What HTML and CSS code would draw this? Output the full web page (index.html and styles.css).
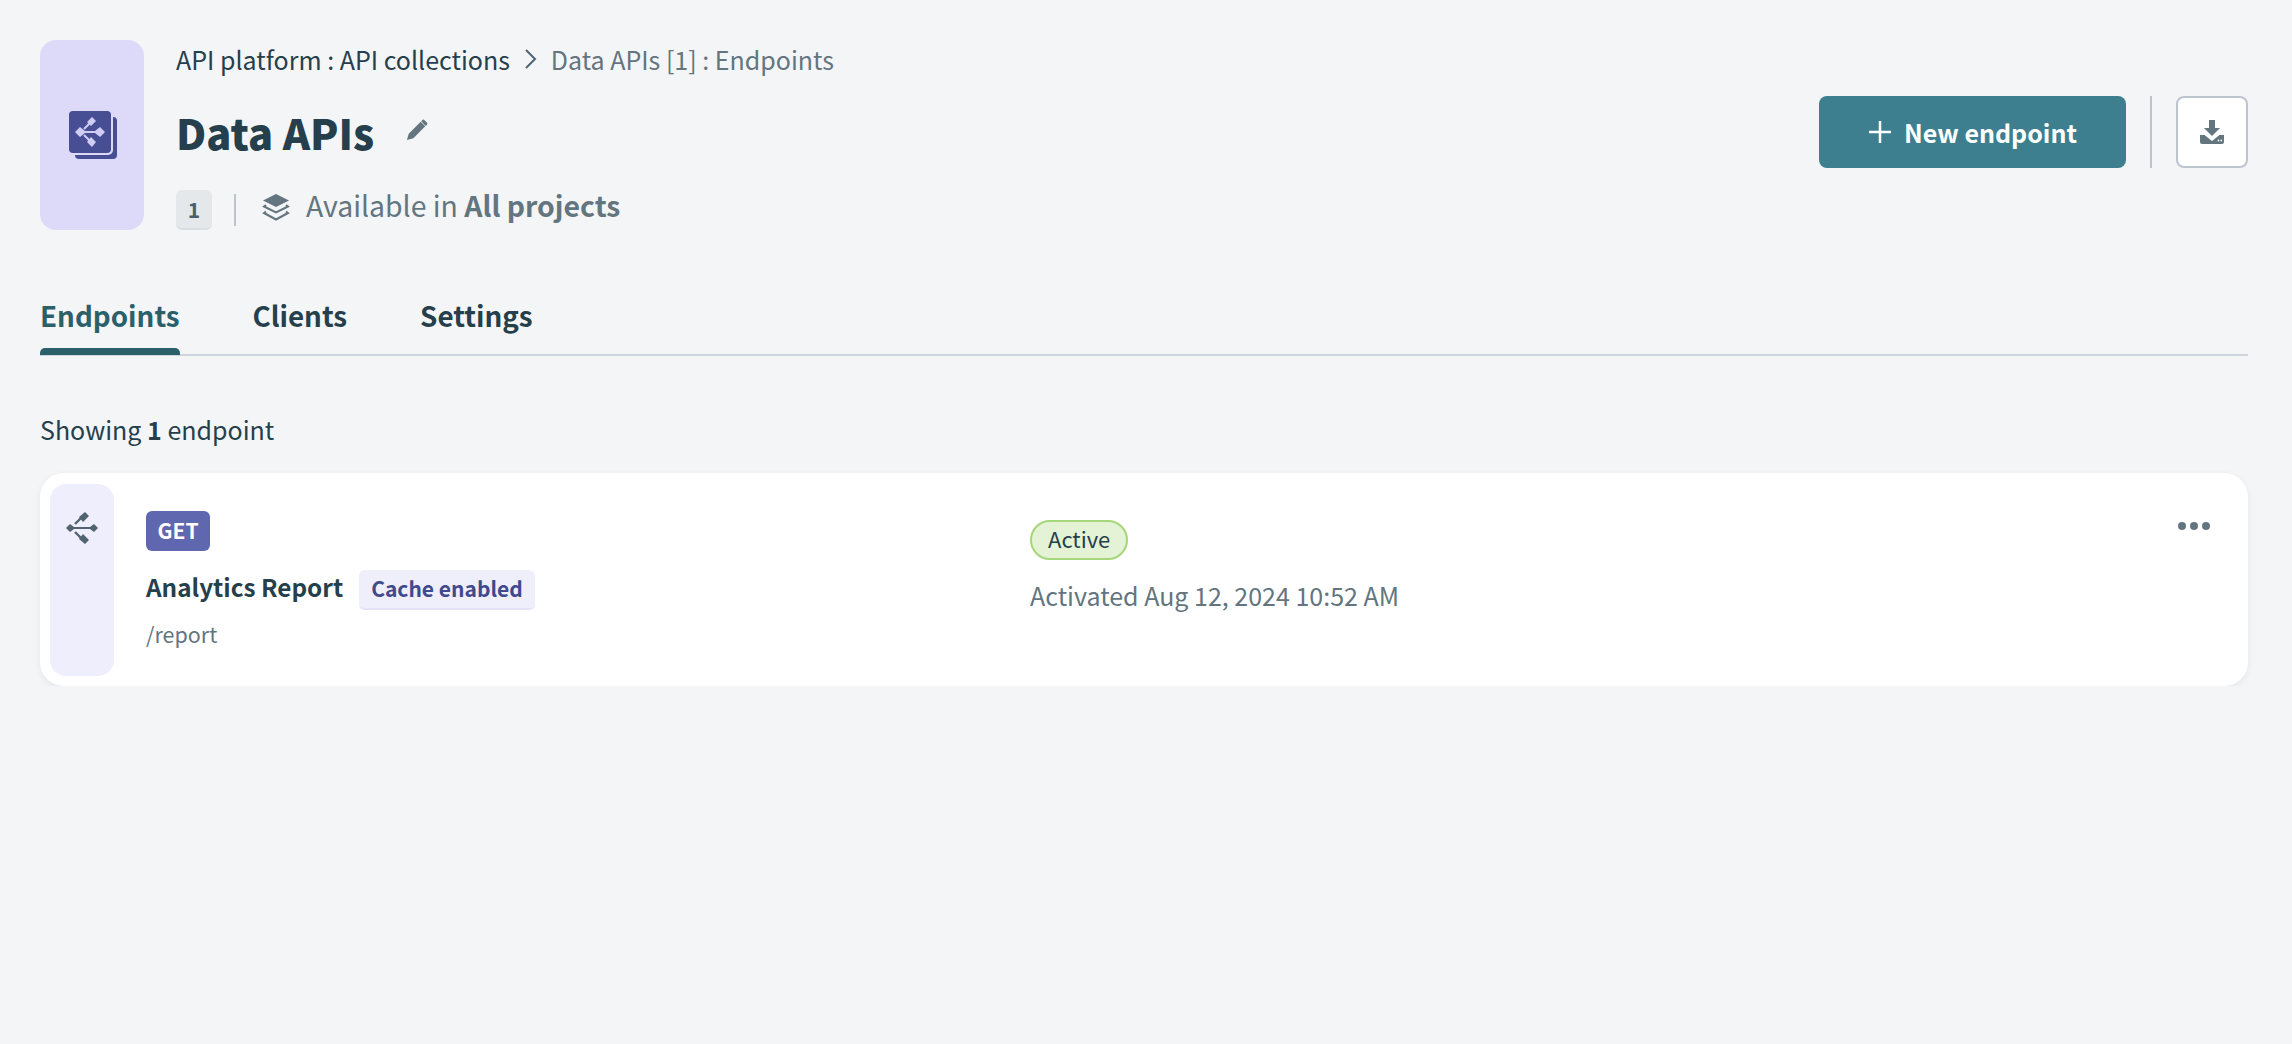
FILE: index.html
```html
<!doctype html>
<html lang="en">
<head>
	<meta charset="UTF-8">
	<title>Data APIs</title>
	<link rel="stylesheet" href="styles.css">
</head>
<body>
	<div class="page">
		<div class="head">
			<div class="tile">
				<svg class="tile-icon" width="48" height="48" viewBox="0 0 48 48">
					<rect class="back" x="6" y="6" width="42" height="42" rx="4"/>
					<rect class="gap" x="0" y="0" width="44" height="44" rx="5"/>
					<rect class="back" x="0" y="0" width="42" height="42" rx="4"/>
					<path class="front" d="M6 21l5-5 5 4h10l5-4 5 5-5 5-5-4H16l-5 4z"/>
					<path class="front-line" d="M15 18l6-6M15 24l6 6"/>
					<path class="front" d="M18 11l5-5 4 4-5 5zM18 31l4-5 5 5-4 5z"/>
				</svg>
			</div>
			<div class="head-main">
				<div class="crumbs">
					<span>API platform : API collections</span>
					<svg class="chevron" width="14" height="22" viewBox="0 0 14 22"><path d="M2 2l9 9-9 9"/></svg>
					<span class="crumb-now">Data APIs [1] : Endpoints</span>
				</div>
				<div class="title-row">
					<h1>Data APIs</h1>
					<svg class="pencil" width="22" height="22" viewBox="0 0 24 24"><path d="M1 23l2-7L16 3l5 5L8 21zM17.500 1.500a2 2 0 0 1 3 0l2 2a2 2 0 0 1 0 3L21.500 7.500l-5-5z"/></svg>
				</div>
				<div class="meta">
					<span class="version">1</span>
					<span class="meta-line"></span>
					<svg class="stack" width="30" height="30" viewBox="0 0 30 30">
						<path class="stack-top" d="M15 2l13 6.500-13 6.500L2 8.500z"/>
						<path class="stack-low" d="M5 13l-2 1.500 12 6 12-6-2-1.500M5 19.500l-2 1.500 12 6.500L27 21l-2-1.500"/>
					</svg>
					<span class="avail">Available in <b>All projects</b></span>
				</div>
			</div>
			<div class="actions">
				<button class="btn-new"><svg width="24" height="24" viewBox="0 0 24 24"><path d="M12 1v22M1 12h22"/></svg>New endpoint</button>
				<span class="action-line"></span>
				<button class="btn-down">
					<svg width="24" height="24" viewBox="0 0 24 24">
						<path d="M9 0h6v8h5l-8 8-8-8h5z"/>
						<path d="M0 15h4.500l7.500 6 7.500-6H24v7a2 2 0 0 1-2 2H2a2 2 0 0 1-2-2z"/>
						<circle class="led" cx="18.500" cy="20.500" r="0.900"/>
						<circle class="led" cx="21.300" cy="20.500" r="0.900"/>
					</svg>
				</button>
			</div>
		</div>

		<div class="tabs">
			<a class="tab active">Endpoints</a>
			<a class="tab">Clients</a>
			<a class="tab">Settings</a>
		</div>

		<p class="count">Showing <b>1</b> endpoint</p>

		<div class="card">
			<div class="strip">
				<svg width="32" height="32" viewBox="0 0 32 32">
					<path d="M0 16l4-4 4 3h16l4-3 4 4-4 4-4-3H8l-4 3z"/>
					<path class="strip-line" d="M9 12l6-6M9 20l6 6"/>
					<path d="M13 5l6-5 4 4-6 6zM13 27l4-5 6 6-4 4z"/>
				</svg>
			</div>
			<div class="ep-info">
				<span class="method">GET</span>
				<div class="ep-name">
					<strong>Analytics Report</strong>
					<span class="chip">Cache enabled</span>
				</div>
				<span class="ep-path">/report</span>
			</div>
			<div class="ep-state">
				<span class="status">Active</span>
				<span class="activated">Activated Aug 12, 2024 10:52 AM</span>
			</div>
			<div class="dots"><i></i><i></i><i></i></div>
		</div>
	</div>
</body>
</html>
```
FILE: styles.css
```css
*{
	margin: 0;
	padding: 0;
	box-sizing: border-box;
}
body{
	background-color: #f4f5f7;
	color: #263f4c;
	font-family: "Noto Sans CJK SC", "Noto Sans", sans-serif;
}
.page{
	padding: 40px 44px 0 40px;
}
.head{
	display: flex;
	height: 190px;
}
.tile{
	width: 104px;
	background-color: #dcdaf8;
	border-radius: 16px;
	display: flex;
	align-items: center;
	justify-content: center;
	flex-shrink: 0;
}
.tile-icon{
	margin-left: 2px;
}
.back{
	fill: #474e93;
}
.gap{
	fill: #dcdaf8;
}
.front{
	fill: #cfcdf5;
}
.front-line{
	fill: none;
	stroke: #cfcdf5;
	stroke-width: 2;
}
.head-main{
	margin-left: 32px;
	display: flex;
	flex-direction: column;
	flex: 1;
}
.crumbs{
	display: flex;
	align-items: center;
	height: 40px;
	margin-top: -1px;
	font-size: 25px;
}
.chevron{
	margin: 0 13px 0 14px;
	fill: none;
	stroke: #4f6470;
	stroke-width: 2;
}
.crumb-now{
	color: #63757f;
}
.title-row{
	display: flex;
	align-items: center;
	height: 60px;
	margin-top: 23px;
}
h1{
	font-size: 41.500px;
	font-weight: 900;
	line-height: 60px;
}
.pencil{
	margin-left: 32px;
	margin-top: -4px;
	fill: #63757f;
}
.meta{
	display: flex;
	align-items: center;
	margin-top: 28px;
	height: 40px;
}
.version{
	width: 36px;
	height: 40px;
	background-color: #e4e8eb;
	border-bottom: 2px solid #d8dee2;
	border-radius: 6px;
	font-size: 21px;
	font-weight: 700;
	color: #4a5f6b;
	text-align: center;
	line-height: 38px;
}
.meta-line{
	width: 2px;
	height: 32px;
	background-color: #bcc5ce;
	margin: 0 25px 0 22px;
}
.stack{
	margin-top: -6px;
}
.stack-top{
	fill: #63757f;
}
.stack-low{
	fill: none;
	stroke: #63757f;
	stroke-width: 2;
}
.avail{
	margin: -12px 0 0 15px;
	font-size: 28.400px;
	color: #63757f;
}
.actions{
	display: flex;
	align-items: center;
	height: 72px;
	margin-top: 56px;
}
.btn-new{
	width: 307px;
	height: 72px;
	background-color: #3d7f8f;
	border: 0;
	border-radius: 8px;
	color: #fff;
	font-family: inherit;
	font-size: 25px;
	font-weight: 700;
	display: flex;
	align-items: center;
	justify-content: center;
}
.btn-new svg{
	margin-right: 12px;
	fill: none;
	stroke: #fff;
	stroke-width: 2.500;
}
.action-line{
	width: 2px;
	height: 72px;
	background-color: #bcc5ce;
	margin: 0 24px;
}
.btn-down{
	width: 72px;
	height: 72px;
	background-color: #fff;
	border: 2px solid #bcc5ce;
	border-radius: 8px;
	display: flex;
	align-items: center;
	justify-content: center;
}
.btn-down svg{
	fill: #63757f;
}
.btn-down .led{
	fill: #fff;
}
.tabs{
	display: flex;
	gap: 73px;
	margin-top: 60px;
	height: 66px;
	border-bottom: 2px solid #cfd5dc;
}
.tab{
	position: relative;
	font-size: 27.800px;
	font-weight: 600;
	line-height: 50px;
}
.tab.active{
	color: #2b5f69;
}
.tab.active::after{
	content: "";
	position: absolute;
	left: 0;
	right: 0;
	bottom: -1px;
	height: 7px;
	background-color: #2b5f69;
	border-radius: 5px 5px 0 0;
}
.count{
	margin-top: 53px;
	font-size: 25px;
	line-height: 40px;
}
.card{
	display: flex;
	margin-top: 24px;
	height: 213px;
	padding: 11px 0 10px 10px;
	background-color: #fff;
	border-radius: 24px;
	box-shadow: 0 2px 6px rgba(40, 60, 70, 0.08);
}
.strip{
	width: 64px;
	background-color: #efeefd;
	border-radius: 16px;
	display: flex;
	justify-content: center;
	padding-top: 28px;
}
.strip svg{
	fill: #4f6470;
}
.strip .strip-line{
	fill: none;
	stroke: #4f6470;
	stroke-width: 2.400;
}
.ep-info{
	width: 916px;
	padding: 27px 0 0 32px;
	display: flex;
	flex-direction: column;
	align-items: flex-start;
}
.method{
	height: 40px;
	width: 64px;
	background-color: #5f68ae;
	border-radius: 6px;
	color: #fff;
	font-size: 21px;
	font-weight: 700;
	line-height: 38px;
	text-align: center;
}
.ep-name{
	display: flex;
	align-items: center;
	margin-top: 19px;
	height: 40px;
}
.ep-name strong{
	font-size: 24.300px;
	font-weight: 600;
	line-height: 34px;
	margin-top: -6px;
}
.chip{
	margin-left: 16px;
	height: 40px;
	padding: 0 12px;
	background-color: #efeefb;
	border-bottom: 2px solid #e3e3f5;
	border-radius: 6px;
	color: #3f4a8c;
	font-size: 21px;
	font-weight: 600;
	line-height: 36px;
}
.ep-path{
	margin-top: 8px;
	font-size: 21.500px;
	color: #63757f;
}
.ep-state{
	flex: 1;
	padding-top: 36px;
	display: flex;
	flex-direction: column;
	align-items: flex-start;
}
.status{
	height: 40px;
	padding: 0 16px;
	background-color: #e4f2d5;
	border: 2px solid #a5d67a;
	border-radius: 20px;
	font-size: 22px;
	line-height: 33px;
}
.activated{
	margin-top: 17px;
	font-size: 25px;
	color: #63757f;
}
.dots{
	display: flex;
	gap: 4px;
	margin: 38px 38px 0 0;
}
.dots i{
	width: 8px;
	height: 8px;
	border-radius: 50%;
	background-color: #63757f;
}
```
